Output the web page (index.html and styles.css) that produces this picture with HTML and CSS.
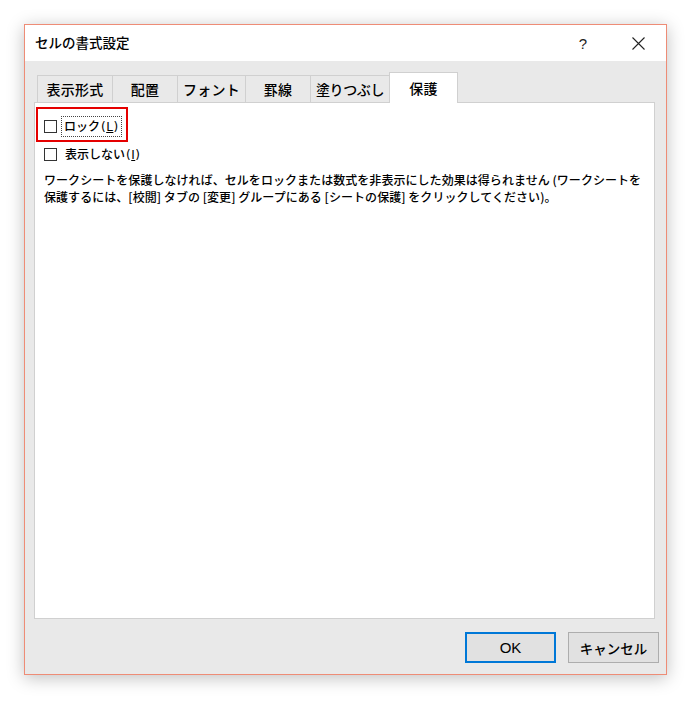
FILE: index.html
```html
<!DOCTYPE html>
<html lang="ja">
<head>
<meta charset="utf-8">
<title>セルの書式設定</title>
<link rel="stylesheet" href="styles.css">
</head>
<body>
<div class="dialog">
  <div class="titlebar">
    <span class="title">セルの書式設定</span>
    <span class="help">?</span>
    <span class="close">
      <svg width="13" height="13" viewBox="0 0 13 13"><path d="M0.5 0.5 L12.5 12.5 M12.5 0.5 L0.5 12.5" stroke="#222" stroke-width="1.1" fill="none"/></svg>
    </span>
  </div>
  <div class="tabs">
    <div class="tab t1">表示形式</div>
    <div class="tab t2">配置</div>
    <div class="tab t3">フォント</div>
    <div class="tab t4">罫線</div>
    <div class="tab t5">塗りつぶし</div>
    <div class="tab active">保護</div>
  </div>
  <div class="panel">
    <div class="highlight"></div>
    <div class="check-row">
      <span class="box"></span>
      <span class="label focus">ロック<span class="mn">(<u>L</u>)</span></span>
    </div>
    <div class="check-row">
      <span class="box"></span>
      <span class="label">表示しない<span class="mn">(<u>I</u>)</span></span>
    </div>
    <p class="note">ワークシートを保護しなければ、セルをロックまたは数式を非表示にした効果は得られません (ワークシートを<br>保護するには、[校閲] タブの [変更] グループにある [シートの保護] をクリックしてください)。</p>
  </div>
  <div class="buttons">
    <div class="btn primary">OK</div>
    <div class="btn">キャンセル</div>
  </div>
</div>
</body>
</html>
```
FILE: styles.css
```css
* { box-sizing: border-box; }
html, body { margin: 0; padding: 0; background: #fff; }
body {
  font-family: "Noto Sans CJK JP", "Noto Sans", sans-serif;
  font-weight: 500;
  color: #000;
  width: 698px;
  height: 711px;
  overflow: hidden;
}
.dialog {
  margin: 24px 0 0 24px;
  width: 643px;
  height: 651px;
  border: 1px solid #ee8c76;
  background: #e9e9e9;
  display: flex;
  flex-direction: column;
  box-shadow: 0 3px 16px rgba(0,0,0,0.25);
}
.titlebar {
  height: 36px;
  background: #fff;
  display: flex;
  align-items: center;
  padding-left: 10px;
  flex: none;
}
.title {
  font-size: 13.5px;
  line-height: 1;
  flex: 1;
  margin-top: -1px;
}
.help {
  font-family: "Liberation Sans", sans-serif;
  font-size: 15px;
  width: 12px;
  text-align: center;
  margin-right: 43px;
  color: #222;
}
.close {
  width: 13px;
  height: 13px;
  margin-right: 21px;
  display: flex;
}
.tabs {
  margin-top: 11px;
  height: 30px;
  display: flex;
  align-items: flex-end;
  padding-left: 12px;
  flex: none;
}
.tab {
  height: 27px;
  border: 1px solid #d0d0d0;
  border-bottom: none;
  margin-right: -1px;
  font-size: 14px;
  display: flex;
  align-items: center;
  justify-content: center;
  letter-spacing: 0.3px;
}
.t1 { width: 76px; }
.t2 { width: 66px; }
.t3 { width: 69px; }
.t4 { width: 66px; }
.t5 { width: 80px; letter-spacing: -0.4px; }
.tab.active {
  width: 69px;
  height: 31px;
  margin-bottom: -1px;
  background: #fff;
  position: relative;
  z-index: 1;
}
.panel {
  position: relative;
  margin: 0 11px 0 9px;
  height: 517px;
  background: #fff;
  border: 1px solid #d0d0d0;
  padding: 13px 0 0 9px;
  flex: none;
}
.highlight {
  position: absolute;
  left: 1px;
  top: 4px;
  width: 92px;
  height: 35px;
  border: 2px solid #e50000;
}
.check-row {
  display: flex;
  align-items: center;
  height: 20px;
  margin-bottom: 8px;
  font-size: 12px;
}
.box {
  width: 13px;
  height: 13px;
  border: 1px solid #333;
  background: #fff;
  margin-right: 5px;
  flex: none;
}
.label {
  padding: 0 2px;
  line-height: 18px;
}
.mn {
  font-family: "DejaVu Sans", sans-serif;
  font-weight: normal;
  font-size: 12px;
  letter-spacing: 0.5px;
  margin-left: 1px;
}
.label.focus {
  outline: 1px dotted #444;
}
.check-row + .check-row .label { margin-left: 1px; }
.note {
  margin: -1px 0 0 0;
  font-size: 12px;
  line-height: 17px;
  letter-spacing: 0.05px;
  white-space: nowrap;
}
.buttons {
  display: flex;
  justify-content: flex-end;
  gap: 12px;
  padding: 13px 7px 0 0;
}
.btn {
  width: 91px;
  height: 31px;
  border: 1px solid #adadad;
  background: #e1e1e1;
  font-size: 13.5px;
  display: flex;
  align-items: center;
  justify-content: center;
}
.btn.primary {
  border: 2px solid #0078d7;
  font-family: "Liberation Sans", "Noto Sans CJK JP", sans-serif;
  font-weight: normal;
  font-size: 15px;
}
```
